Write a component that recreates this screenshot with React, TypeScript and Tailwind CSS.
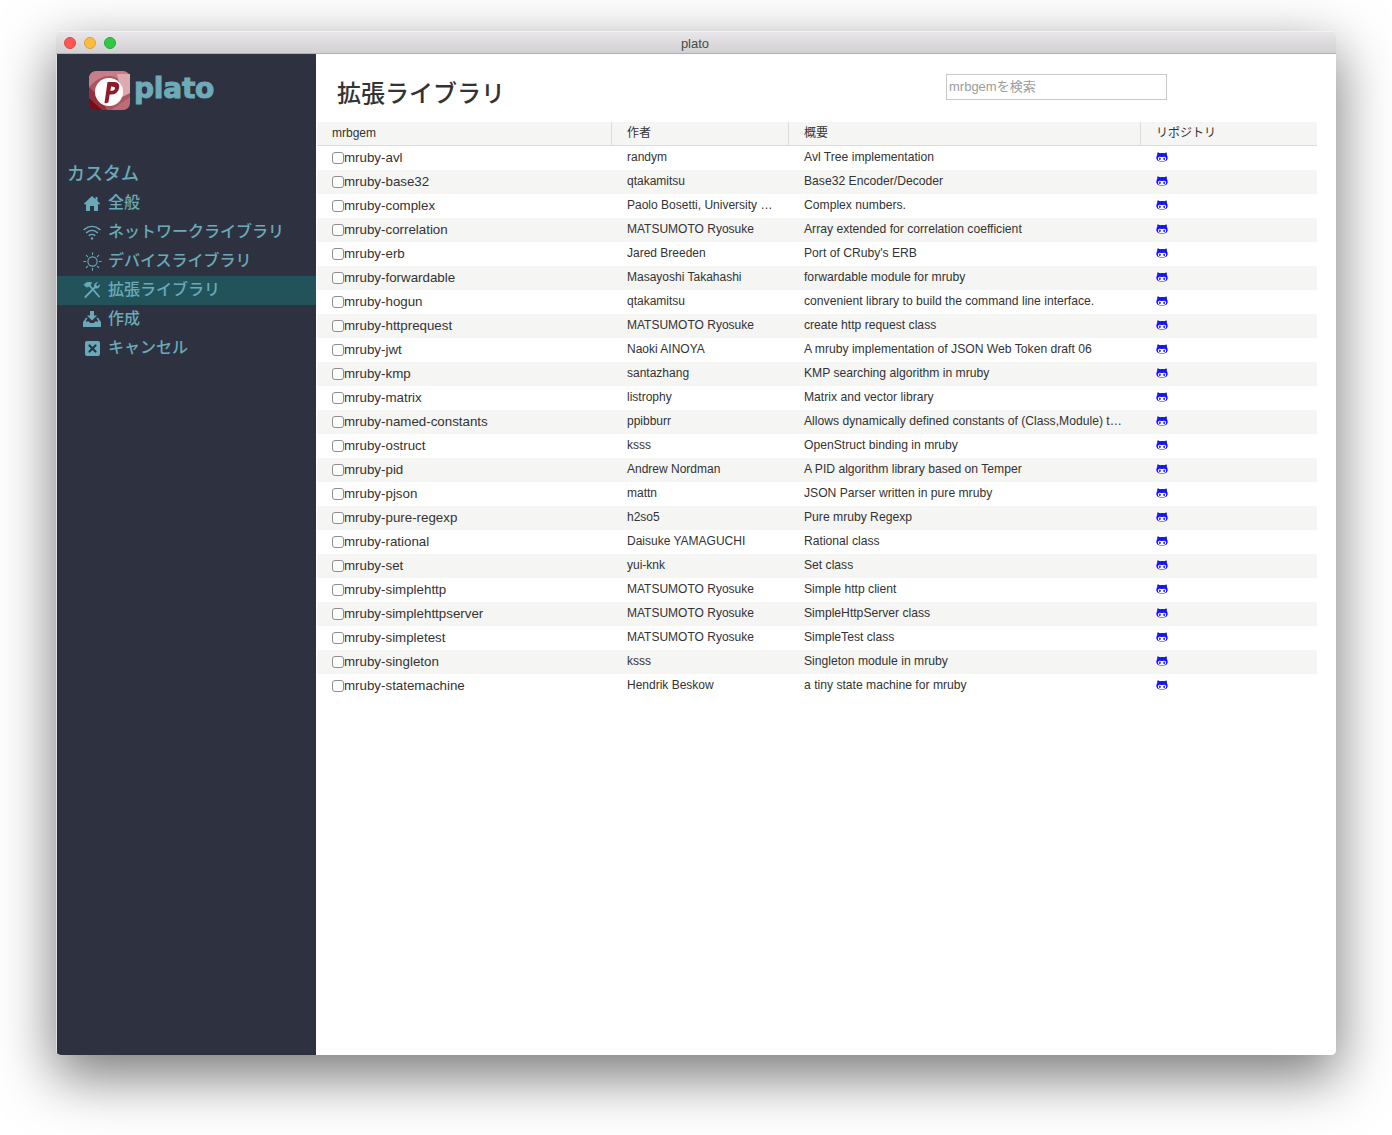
import { FaGithubAlt } from "react-icons/fa";
import type { ReactNode } from "react";

const sans = "font-['Liberation_Sans','Noto_Sans_CJK_JP',sans-serif]";

const gems = [
  ["mruby-avl", "randym", "Avl Tree implementation"],
  ["mruby-base32", "qtakamitsu", "Base32 Encoder/Decoder"],
  ["mruby-complex", "Paolo Bosetti, University …", "Complex numbers."],
  ["mruby-correlation", "MATSUMOTO Ryosuke", "Array extended for correlation coefficient"],
  ["mruby-erb", "Jared Breeden", "Port of CRuby's ERB"],
  ["mruby-forwardable", "Masayoshi Takahashi", "forwardable module for mruby"],
  ["mruby-hogun", "qtakamitsu", "convenient library to build the command line interface."],
  ["mruby-httprequest", "MATSUMOTO Ryosuke", "create http request class"],
  ["mruby-jwt", "Naoki AINOYA", "A mruby implementation of JSON Web Token draft 06"],
  ["mruby-kmp", "santazhang", "KMP searching algorithm in mruby"],
  ["mruby-matrix", "listrophy", "Matrix and vector library"],
  ["mruby-named-constants", "ppibburr", "Allows dynamically defined constants of (Class,Module) t…"],
  ["mruby-ostruct", "ksss", "OpenStruct binding in mruby"],
  ["mruby-pid", "Andrew Nordman", "A PID algorithm library based on Temper"],
  ["mruby-pjson", "mattn", "JSON Parser written in pure mruby"],
  ["mruby-pure-regexp", "h2so5", "Pure mruby Regexp"],
  ["mruby-rational", "Daisuke YAMAGUCHI", "Rational class"],
  ["mruby-set", "yui-knk", "Set class"],
  ["mruby-simplehttp", "MATSUMOTO Ryosuke", "Simple http client"],
  ["mruby-simplehttpserver", "MATSUMOTO Ryosuke", "SimpleHttpServer class"],
  ["mruby-simpletest", "MATSUMOTO Ryosuke", "SimpleTest class"],
  ["mruby-singleton", "ksss", "Singleton module in mruby"],
  ["mruby-statemachine", "Hendrik Beskow", "a tiny state machine for mruby"],
];

function NavItem({ icon, label, active }: { icon: ReactNode; label: string; active?: boolean }) {
  return (
    <div className={`flex items-center h-[29px] pl-[25px] ${active ? "bg-[#22535b]" : ""}`}>
      <div className="w-[20px] flex justify-center -mt-[1px]">{icon}</div>
      <span className="ml-[6px] text-[16px] font-medium pb-[2px]">{label}</span>
    </div>
  );
}

function HomeIcon() {
  return (
    <svg width="16" height="15" viewBox="0 0 16 15" fill="currentColor">
      <path d="M8 0 L11.5 3.2 V1 H13.5 V5 L16 7.6 V8.2 H14 V15 H10 V10 H6 V15 H2 V8.2 H0 V7.6 Z" />
    </svg>
  );
}

function WifiIcon() {
  return (
    <svg width="18" height="15" viewBox="0 0 18 15" fill="none" stroke="currentColor" strokeWidth="1.4" strokeLinecap="round">
      <path d="M1 4.6 Q9 -1.8 17 4.6" />
      <path d="M3.6 7.6 Q9 3.2 14.4 7.6" />
      <path d="M6.2 10.4 Q9 8.4 11.8 10.4" />
      <circle cx="9" cy="13.4" r="1.2" fill="currentColor" stroke="none" />
    </svg>
  );
}

function SunIcon() {
  return (
    <svg width="19" height="19" viewBox="0 0 19 19" fill="none" stroke="currentColor" strokeWidth="1.1" strokeLinecap="round">
      <circle cx="9.5" cy="9.5" r="4.6" />
      <path d="M9.5 0.8 V2.6 M9.5 16.4 V18.2 M0.8 9.5 H2.6 M16.4 9.5 H18.2 M3.3 3.3 L4.6 4.6 M14.4 14.4 L15.7 15.7 M15.7 3.3 L14.4 4.6 M4.6 14.4 L3.3 15.7" />
    </svg>
  );
}

function ToolsIcon() {
  return (
    <svg width="18" height="18" viewBox="0 0 18 18" fill="none" stroke="currentColor" strokeLinecap="round">
      <path d="M6.5 4.5 L16 15.5" strokeWidth="1.8" />
      <path d="M1 3.4 Q4.5 0 8.6 1.6 L6.6 5.6 L3.4 6 Z" fill="currentColor" strokeWidth="0.6" />
      <path d="M12 6.2 L2.4 16" strokeWidth="1.8" />
      <path d="M11.2 6.8 Q10.6 3 13.4 1.6 L14.4 1.4 L12.8 3.8 L14.4 5.4 L16.8 3.6 Q16.8 7 13.2 7.6 Z" fill="currentColor" strokeWidth="0.4" />
    </svg>
  );
}

function InstallIcon() {
  return (
    <svg width="18" height="16" viewBox="0 0 18 16" fill="currentColor">
      <path d="M7 0 H11 V4.5 H14 L9 9.5 L4 4.5 H7 Z" />
      <path d="M3 6.8 H4.6 L2.6 10.4 H6 L7 12 H11 L12 10.4 H15.4 L13.4 6.8 H15 L18 11 V16 H0 V11 Z" />
    </svg>
  );
}

function CancelIcon() {
  return (
    <svg width="15" height="15" viewBox="0 0 15 15">
      <rect width="15" height="15" rx="2" fill="currentColor" />
      <path d="M4.5 4.5 L10.5 10.5 M10.5 4.5 L4.5 10.5" stroke="#2e3240" strokeWidth="2.2" strokeLinecap="round" />
    </svg>
  );
}

function Logo() {
  return (
    <svg width="41" height="39" viewBox="0 0 41 39" className="shrink-0">
      <rect width="41" height="39" rx="8" fill="#ad5560" />
      <path d="M8 0 H33 Q41 0 41 8 V14 L26 6 Q14 2 2 14 L0 16 V8 Q0 0 8 0 Z" fill="#c57f88" />
      <path d="M28 3 H41 V22 L33 26 Z" fill="#dcaab0" />
      <path d="M0 16 L12 28 L18 39 H8 Q0 39 0 31 Z" fill="#93303c" />
      <path d="M0 27 L13 39 H8 Q0 39 0 33 Z" fill="#7a0c18" />
      <path d="M22 39 L41 26 V31 Q41 39 33 39 Z" fill="#bd6d76" />
      <circle cx="20" cy="21" r="14" fill="#ffffff" />
      <path d="M15.5 32 L18.5 11 L25.5 11 Q31.5 11.5 30 17.5 Q28.5 23.5 22 23.5 L20.6 23.5 L19.5 31 Q17.5 33 15.5 32 Z M22.2 15.5 L21.3 19.8 Q25.5 20 26 17.4 Q26 15.4 22.2 15.5 Z" fill="#8e1b29" fillRule="evenodd" />
    </svg>
  );
}

export default function App() {
  return (
    <div className={`w-[1392px] h-[1135px] bg-white pt-[31px] pl-[56px] overflow-hidden ${sans}`}>
      <div className="w-[1280px] h-[1024px] flex flex-col rounded-[5px] overflow-hidden shadow-[0_20px_55px_2px_rgba(0,0,0,0.52)]">
        <div className="relative h-[23px] shrink-0 flex items-center justify-center bg-gradient-to-b from-[#e8e6e8] to-[#d2d0d2] border-t border-t-[#f2f2f2] border-b border-b-[#b1b1b1]">
          <div className="absolute left-[8px] top-[5px] flex gap-[8px]">
            <div className="w-[12px] h-[12px] rounded-full bg-[#fc5753] border border-[#df4744]" />
            <div className="w-[12px] h-[12px] rounded-full bg-[#fdbc40] border border-[#de9f34]" />
            <div className="w-[12px] h-[12px] rounded-full bg-[#33c748] border border-[#27aa35]" />
          </div>
          <span className="text-[13px] text-[#4a4a4a] pt-[2px] pr-[2px]">plato</span>
        </div>
        <div className="flex flex-1 min-h-0 pl-[1px] bg-[#dedede]">
          <aside className="w-[259px] shrink-0 bg-[#2e3240] text-[#6aa9b8]">
            <div className="flex items-start h-[70px] pl-[32px] pt-[17px]">
              <Logo />
              <span className="ml-[4px] text-[28px] leading-[36px] font-bold font-['DejaVu_Sans',sans-serif] tracking-[-0.2px] text-[#6dabb8] [-webkit-text-stroke:1px_#6dabb8]">plato</span>
            </div>
            <div className="mt-[36px] pl-[10px] h-[28px] flex items-center text-[18px] font-medium">カスタム</div>
            <div className="mt-[1px]">
              <NavItem icon={<HomeIcon />} label="全般" />
              <NavItem icon={<WifiIcon />} label="ネットワークライブラリ" />
              <NavItem icon={<SunIcon />} label="デバイスライブラリ" />
              <NavItem icon={<ToolsIcon />} label="拡張ライブラリ" active />
              <NavItem icon={<InstallIcon />} label="作成" />
              <NavItem icon={<CancelIcon />} label="キャンセル" />
            </div>
          </aside>
          <main className="flex-1 bg-white min-w-0 pl-[1px] pr-[19px]">
            <div className="h-[68px] flex items-start">
              <h1 className="w-[629px] pl-[20px] pt-[22px] text-[24px] leading-[36px] font-medium text-[#333333]">拡張ライブラリ</h1>
              <input
                className="mt-[20px] w-[221px] h-[26px] px-[2px] pb-[2px] border border-[#c9c9c9] text-[13px] outline-none placeholder:text-[#9c9c9c]"
                placeholder="mrbgemを検索"
              />
            </div>
            <div className="flex h-[24px] bg-[#f5f5f3] border-b border-[#dddddd] text-[12px] leading-[23px] text-[#333333]">
              <div className="w-[295px] pl-[15px] border-r border-[#dddddd]">mrbgem</div>
              <div className="w-[177px] pl-[15px] border-r border-[#dddddd]">作者</div>
              <div className="w-[352px] pl-[15px] border-r border-[#dddddd]">概要</div>
              <div className="flex-1 pl-[15px]">リポジトリ</div>
            </div>
            {gems.map(([name, author, summary], i) => (
              <div key={name} className={`flex h-[24px] items-center text-[12px] text-[#333333] ${i % 2 === 1 ? "bg-[#f5f5f3]" : ""}`}>
                <label className="w-[295px] pl-[15px] flex items-center text-[13.33px] pb-[1px]">
                  <input type="checkbox" className="appearance-none mt-[2px] w-[12px] h-[12px] rounded-[3px] border border-[#8f8f8f] bg-white" />
                  <span>{name}</span>
                </label>
                <div className="w-[177px] pl-[15px] whitespace-nowrap -mt-[2px]">{author}</div>
                <div className="w-[352px] pl-[15px] whitespace-nowrap text-[12.15px] -mt-[2px]">{summary}</div>
                <div className="flex-1 pl-[15px] -mt-[3px]">
                  <FaGithubAlt size={12} className="text-[#1414f5]" />
                </div>
              </div>
            ))}
          </main>
        </div>
      </div>
    </div>
  );
}
